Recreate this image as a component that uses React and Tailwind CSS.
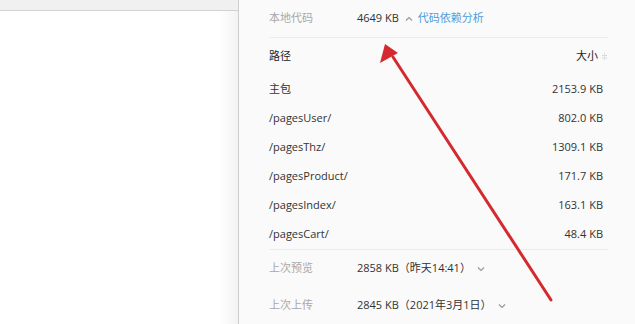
import React from 'react';

const rows = [
  { path: '主包', size: '2153.9 KB' },
  { path: '/pagesUser/', size: '802.0 KB' },
  { path: '/pagesThz/', size: '1309.1 KB' },
  { path: '/pagesProduct/', size: '171.7 KB' },
  { path: '/pagesIndex/', size: '163.1 KB' },
  { path: '/pagesCart/', size: '48.4 KB' },
];

function Chevron({ up }) {
  return (
    <svg width="8" height="6" viewBox="0 0 8 6" className="ml-[6px]">
      <path d={up ? 'M1 4.5L4 1.5L7 4.5' : 'M1 1.5L4 4.5L7 1.5'} fill="none" stroke="#999" strokeWidth="1.2" />
    </svg>
  );
}

export default function App() {
  return (
    <div
      className="relative flex w-[635px] h-[324px] overflow-hidden bg-white text-[11px] text-[#333]"
      style={{ fontFamily: '"Open Sans", "Noto Sans CJK SC", sans-serif' }}
    >
      {/* left editor area */}
      <div className="w-[239px] flex flex-col border-r border-[#cfcfcf] bg-gradient-to-r from-white from-[92%] to-[#f3f3f3]">
        <div className="h-[11px] bg-[#f0f0f0] border-b border-[#d2d2d2]" />
      </div>

      {/* right detail panel */}
      <div className="flex-1 bg-[#fafafa] pl-[30px] pr-[27px]">
        <div className="flex items-center h-[38px] border-b border-[#ececec]">
          <span className="w-[88px] text-[#a8a8a8]">本地代码</span>
          <span>4649 KB</span>
          <Chevron up />
          <span className="ml-[5px] text-[#4a9ee0]">代码依赖分析</span>
        </div>

        <div className="flex items-center justify-between h-[37px] text-[#222]">
          <span>路径</span>
          <span className="flex items-center">
            大小
            <svg width="7" height="9" viewBox="0 0 7 9" className="ml-[3px]">
              <path d="M1 3.5H6M1 6H6" stroke="#d6d6d6" strokeWidth="1" />
              <path d="M3.5 0.5V8.5" stroke="#e2e2e2" strokeWidth="1" />
            </svg>
          </span>
        </div>

        <div className="border-b border-[#ececec]">
          {rows.map((r) => (
            <div key={r.path} className="flex items-center justify-between h-[29px] pr-[5px]">
              <span>{r.path}</span>
              <span>{r.size}</span>
            </div>
          ))}
        </div>

        <div className="flex items-center h-[37px]">
          <span className="w-[88px] text-[#a8a8a8]">上次预览</span>
          <span>2858 KB（昨天14:41）</span>
          <Chevron />
        </div>
        <div className="flex items-center h-[37px]">
          <span className="w-[88px] text-[#a8a8a8]">上次上传</span>
          <span>2845 KB（2021年3月1日）</span>
          <Chevron />
        </div>
      </div>

      {/* red annotation arrow */}
      <svg className="absolute left-0 top-0 pointer-events-none" width="635" height="324">
        <line x1="551" y1="300" x2="393" y2="57" stroke="#d42a2f" strokeWidth="3" strokeLinecap="round" />
        <polygon points="385,44 380,63 398,53" fill="#d42a2f" />
      </svg>
    </div>
  );
}
